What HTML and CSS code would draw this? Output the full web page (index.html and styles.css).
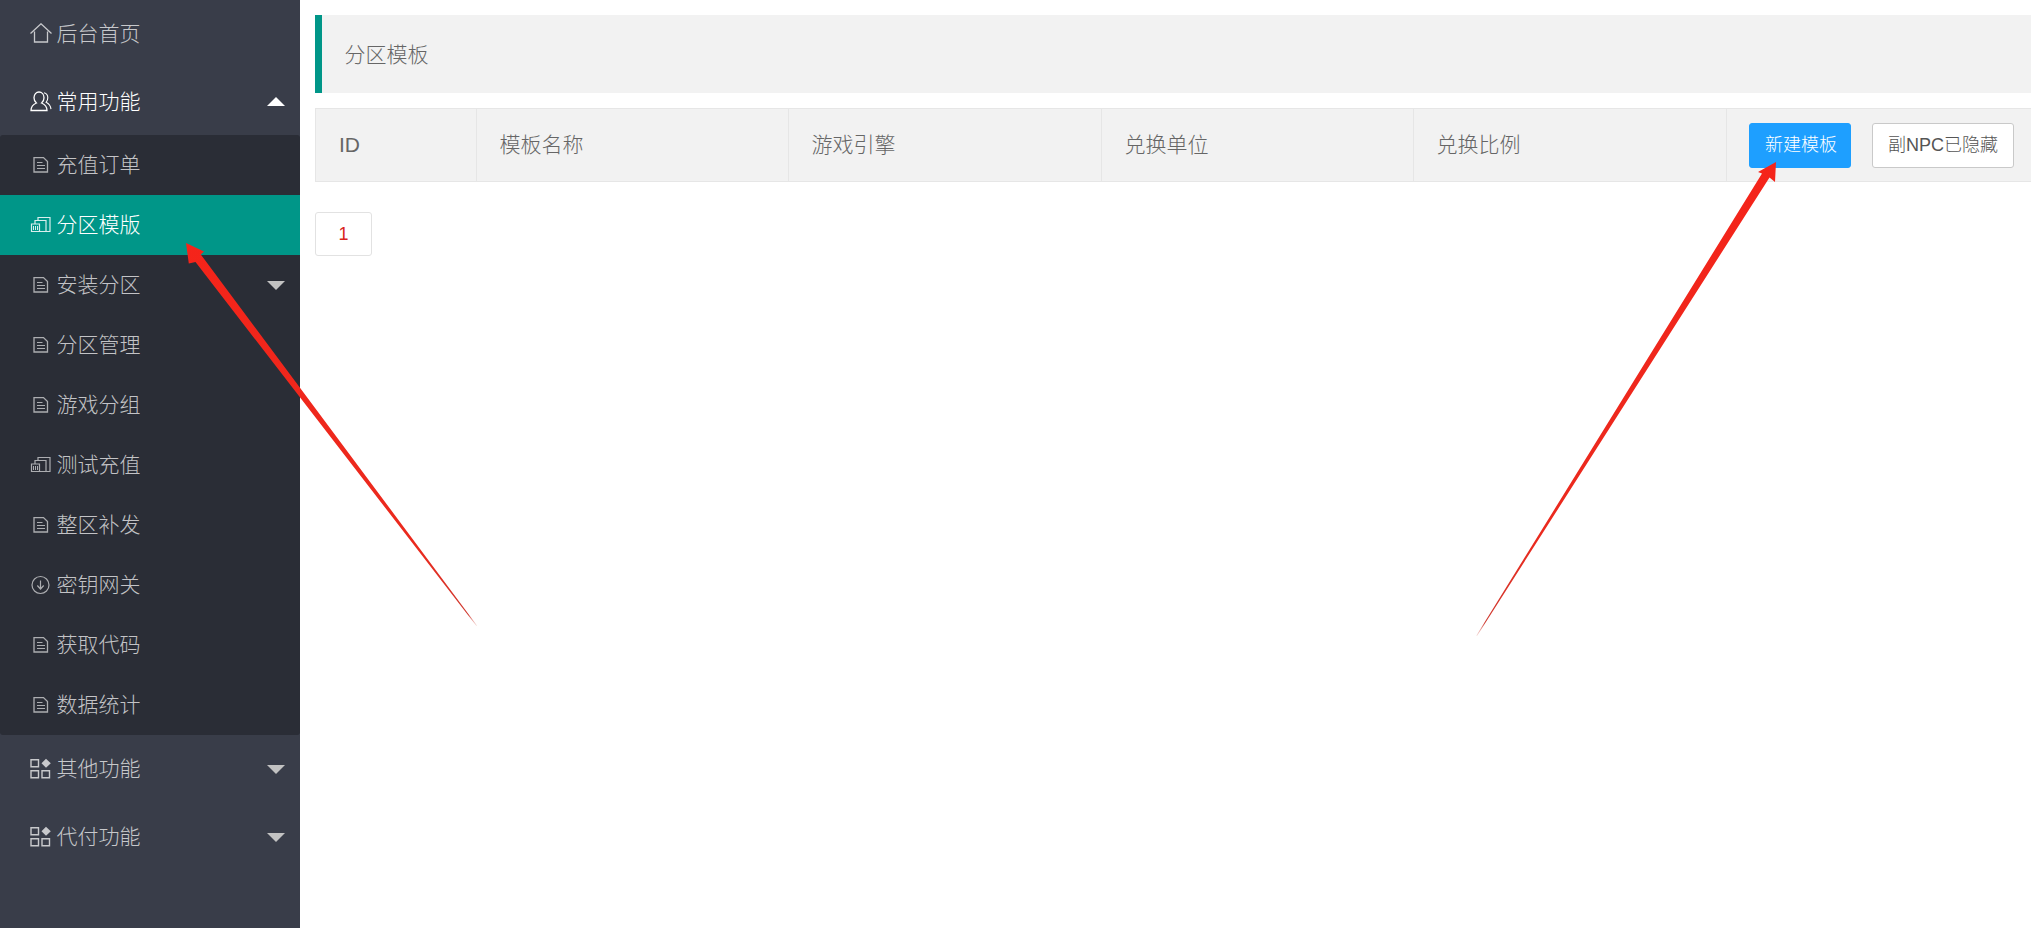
FILE: index.html
```html
<!DOCTYPE html>
<html lang="zh-CN">
<head>
<meta charset="utf-8">
<title>分区模板</title>
<link rel="stylesheet" href="styles.css">
</head>
<body>
<svg class="defs" width="0" height="0" aria-hidden="true">
  <defs>
    <symbol id="i-home" viewBox="0 0 22 22">
      <path d="M0.5 10.500 11 0.800l10.500 9.700M4.500 8.500v10.500h13V8.500" fill="none" stroke="currentColor" stroke-width="1.300"/>
    </symbol>
    <symbol id="i-users" viewBox="0 0 22 22">
      <path d="M1 20.500c0-4.200 2.400-6.200 5.400-7.500C4.800 11.700 4 9.800 4 7.700 4 4.400 6.200 2 9 2s5 2.400 5 5.700c0 2.100-.8 4-2.400 5.300 3 1.300 5.400 3.300 5.400 7.500z" fill="none" stroke="currentColor" stroke-width="1.300"/>
      <path d="M14 2.800c2.300.6 3.800 2.600 3.800 5 0 1.700-.6 3.300-1.700 4.500 2.600 1.300 4.500 3.400 4.900 6.800" fill="none" stroke="currentColor" stroke-width="1.100"/>
    </symbol>
    <symbol id="i-doc" viewBox="0 0 22 22">
      <path d="M4 3.600h9.500l4 4v10.400H4z" fill="none" stroke="currentColor" stroke-width="1.300"/>
      <path d="M7 8.500h5.500M7 11.500h8M7 14.500h8" fill="none" stroke="currentColor" stroke-width="1.200"/>
    </symbol>
    <symbol id="i-stack" viewBox="0 0 22 22">
      <path d="M1.500 10h8v7.500h-8zM5 10V6.500h11v11h-6.500M8 6.500V3.500h12v14h-4" fill="none" stroke="currentColor" stroke-width="1.200"/>
      <path d="M3.500 12v4M5.500 12v4M7.500 12v4" fill="none" stroke="currentColor" stroke-width="1"/>
    </symbol>
    <symbol id="i-down" viewBox="0 0 22 22">
      <circle cx="10.500" cy="11" r="8.500" fill="none" stroke="currentColor" stroke-width="1.200"/>
      <path d="M10.500 6.500v8M7.300 11.500l3.200 3.500 3.200-3.500" fill="none" stroke="currentColor" stroke-width="1.200"/>
    </symbol>
    <symbol id="i-grid" viewBox="0 0 22 22">
      <path d="M1 1.800h7.500v7H1zM1 12.800h7.500v7H1zM12 12.800h7.500v7H12z" fill="none" stroke="currentColor" stroke-width="1.400"/>
      <path d="M16 .8 20.800 5.300 16 9.800 11.500 5.300z" fill="currentColor"/>
    </symbol>
    <linearGradient id="fade-left" gradientUnits="userSpaceOnUse" x1="186" y1="243" x2="477" y2="626">
      <stop offset="0" stop-color="#f5241a"/>
      <stop offset="0.8" stop-color="#ea2a1e"/>
      <stop offset="0.97" stop-color="#cf3a30"/>
      <stop offset="1" stop-color="#e6a09a" stop-opacity="0.3"/>
    </linearGradient>
    <linearGradient id="fade-right" gradientUnits="userSpaceOnUse" x1="1776" y1="162" x2="1476" y2="637">
      <stop offset="0" stop-color="#f5241a"/>
      <stop offset="0.8" stop-color="#ea2a1e"/>
      <stop offset="0.97" stop-color="#cf3a30"/>
      <stop offset="1" stop-color="#e6a09a" stop-opacity="0.3"/>
    </linearGradient>
  </defs>
</svg>

<aside class="sidebar">
  <ul class="nav">
    <li class="nav-item first"><svg class="icon"><use href="#i-home"/></svg><span>后台首页</span></li>
    <li class="nav-item open"><svg class="icon"><use href="#i-users"/></svg><span>常用功能</span><i class="caret up"></i></li>
    <li>
      <ul class="subnav">
        <li class="sub-item"><svg class="icon"><use href="#i-doc"/></svg><span>充值订单</span></li>
        <li class="sub-item active"><svg class="icon"><use href="#i-stack"/></svg><span>分区模版</span></li>
        <li class="sub-item"><svg class="icon"><use href="#i-doc"/></svg><span>安装分区</span><i class="caret"></i></li>
        <li class="sub-item"><svg class="icon"><use href="#i-doc"/></svg><span>分区管理</span></li>
        <li class="sub-item"><svg class="icon"><use href="#i-doc"/></svg><span>游戏分组</span></li>
        <li class="sub-item"><svg class="icon"><use href="#i-stack"/></svg><span>测试充值</span></li>
        <li class="sub-item"><svg class="icon"><use href="#i-doc"/></svg><span>整区补发</span></li>
        <li class="sub-item"><svg class="icon"><use href="#i-down"/></svg><span>密钥网关</span></li>
        <li class="sub-item"><svg class="icon"><use href="#i-doc"/></svg><span>获取代码</span></li>
        <li class="sub-item"><svg class="icon"><use href="#i-doc"/></svg><span>数据统计</span></li>
      </ul>
    </li>
    <li class="nav-item lower"><svg class="icon"><use href="#i-grid"/></svg><span>其他功能</span><i class="caret"></i></li>
    <li class="nav-item lower"><svg class="icon"><use href="#i-grid"/></svg><span>代付功能</span><i class="caret"></i></li>
  </ul>
</aside>

<main class="main">
  <div class="page-title">分区模板</div>
  <table class="grid">
    <colgroup>
      <col class="col-id"><col class="col-a"><col class="col-b"><col class="col-a"><col class="col-b"><col class="col-ops">
    </colgroup>
    <thead>
      <tr>
        <th class="th-id">ID</th>
        <th>模板名称</th>
        <th>游戏引擎</th>
        <th>兑换单位</th>
        <th>兑换比例</th>
        <th class="th-ops">
          <div class="ops">
            <button class="btn primary" type="button">新建模板</button>
            <button class="btn" type="button">副NPC已隐藏</button>
          </div>
        </th>
      </tr>
    </thead>
  </table>
  <div class="pager"><a class="page">1</a></div>
</main>

<svg class="arrows" viewBox="0 0 2031 928" aria-hidden="true">
  <polygon fill="url(#fade-left)" points="186,243 204,251.500 200.800,254.500 477,625.500 476.400,625.900 195.500,262 188.800,263.500"/>
  <polygon fill="url(#fade-right)" points="1776,162 1775,182 1769.500,177.500 1477,636 1476.400,635.600 1762,173.500 1758,172"/>
</svg>
</body>
</html>
```
FILE: styles.css
```css
* {
  box-sizing: border-box;
}

html,
body {
  height: 100%;
  margin: 0;
}

body {
  display: flex;
  overflow: hidden;
  background: #fff;
  color: #666;
  font-family: "Liberation Sans", "Noto Sans CJK SC", sans-serif;
  font-size: 21px;
  font-weight: 300;
}

ul {
  list-style: none;
  margin: 0;
  padding: 0;
}

.defs {
  position: absolute;
}

.sidebar {
  flex: 0 0 300px;
  height: 100%;
  background: #393d49;
  overflow: hidden;
}

.nav-item,
.sub-item {
  display: flex;
  align-items: center;
  padding: 0 15px 0 30px;
  color: rgba(255, 255, 255, 0.72);
}

.nav-item span {
  padding-bottom: 3px;
}

.sub-item span,
.nav-item.lower span {
  padding-bottom: 5px;
}

.nav-item {
  height: 68px;
}

.nav-item.first {
  height: 67px;
}

.nav-item.open {
  color: #fff;
}

.subnav {
  background: #2a2d36;
  border-radius: 3px;
}

.sub-item {
  height: 60px;
}

.sub-item.active {
  background: #009688;
  color: #fff;
}

.icon {
  flex: 0 0 22px;
  width: 22px;
  height: 22px;
  margin-right: 4.5px;
}

.sub-item .icon {
  opacity: 0.85;
}

.caret {
  margin-left: auto;
  width: 0;
  height: 0;
  border-style: solid;
  border-width: 9px 9px 0;
  border-color: #c2c2c2 transparent transparent;
}

.caret.up {
  border-width: 0 9px 9px;
  border-color: transparent transparent #fff;
}

.main {
  flex: 1 1 0;
  min-width: 0;
  padding: 15px 0 0 15px;
  overflow: hidden;
}

.page-title {
  display: flex;
  align-items: center;
  height: 78px;
  padding: 0 0 3px 22.5px;
  border-left: 7px solid #009688;
  background: #f2f2f2;
}

.grid {
  width: 1724px;
  margin-top: 15px;
  border-collapse: collapse;
  table-layout: fixed;
}

.col-id {
  width: 161px;
}

.col-a {
  width: 312px;
}

.col-b {
  width: 313px;
}

.col-ops {
  width: 313px;
}

.grid th {
  height: 73px;
  padding: 0 22.5px 5px;
  border: 1px solid #e6e6e6;
  background: #f2f2f2;
  font-weight: 300;
  text-align: left;
}

.grid .th-id {
  padding: 0 23px 1px;
}

.grid .th-ops {
  padding: 0 22px;
}

.ops {
  display: flex;
  gap: 21px;
}

.btn {
  height: 45px;
  padding: 0 15px 5px;
  border: 1px solid #c9c9c9;
  border-radius: 3px;
  background: #fff;
  color: #555;
  font: inherit;
  font-size: 18px;
  white-space: nowrap;
}

.btn.primary {
  width: 102px;
  border-color: #1e9fff;
  background: #1e9fff;
  color: #fff;
}

.pager {
  display: flex;
  margin-top: 30px;
}

.page {
  display: flex;
  align-items: center;
  justify-content: center;
  width: 57px;
  height: 44px;
  border: 1px solid #e2e2e2;
  border-radius: 3px;
  color: #d9251c;
  font-size: 18px;
}

.arrows {
  position: absolute;
  top: 0;
  left: 0;
  width: 2031px;
  height: 928px;
  pointer-events: none;
}
```
